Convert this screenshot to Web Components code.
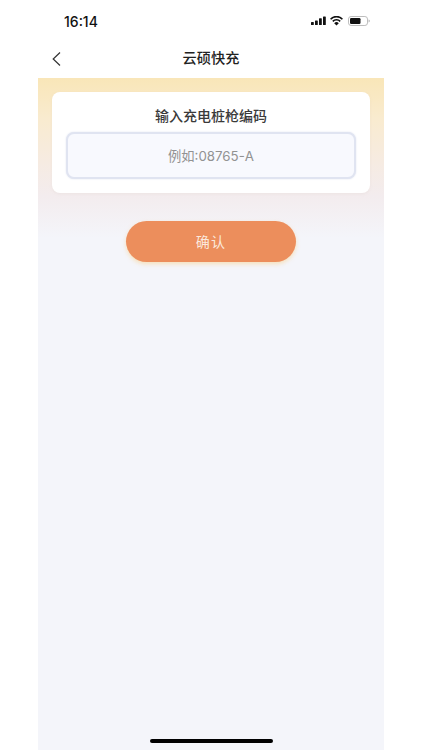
<!DOCTYPE html>
<html lang="zh">
<head>
<meta charset="utf-8">
<title>云硕快充</title>
<style>
  html, body { margin: 0; height: 100%; background: #fff; }
  body { font-family: Inter, "Noto Sans CJK SC", sans-serif; overflow: hidden; }
</style>
</head>
<body>
<charge-app>
  <status-bar time="16:14"></status-bar>
  <nav-bar>云硕快充</nav-bar>
  <code-panel heading="输入充电桩枪编码" placeholder="例如:08765-A">确认</code-panel>
</charge-app>
<script>
class ChargeApp extends HTMLElement {
  constructor() {
    super();
    this.attachShadow({ mode: "open" }).innerHTML = `
      <style>
        :host { display: flex; flex-direction: column; width: 346px; height: 750px; margin: 0 auto; position: relative; }
        .bar { position: absolute; left: 112px; bottom: 7px; width: 123px; height: 4px; border-radius: 2px; background: #000; }
      </style>
      <slot></slot>
      <div class="bar"></div>`;
  }
}

class StatusBar extends HTMLElement {
  constructor() {
    super();
    this.attachShadow({ mode: "open" }).innerHTML = `
      <style>
        :host { display: flex; justify-content: space-between; align-items: center; height: 42px; padding: 0 14px 0 26px; box-sizing: border-box; }
        .time { font: 500 14px/1 Inter, sans-serif; color: #111; padding-top: 1px; }
        svg { display: block; }
      </style>
      <span class="time">${this.getAttribute("time")}</span>
      <svg width="60" height="10" viewBox="0 0 60 10">
        <rect x="1" y="6" width="2.8" height="3" rx=".6" fill="#111"/>
        <rect x="5" y="4.4" width="2.8" height="4.6" rx=".6" fill="#111"/>
        <rect x="9" y="2.2" width="2.8" height="6.8" rx=".6" fill="#111"/>
        <rect x="13" y=".4" width="2.8" height="8.6" rx=".6" fill="#111"/>
        <path d="M20.6 3.2a8 8 0 0 1 11.8 0M22.8 5.4a5 5 0 0 1 7.4 0" fill="none" stroke="#111" stroke-width="1.6"/>
        <path d="M26.5 9.6l-2.3-2.4a3.2 3.2 0 0 1 4.6 0z" fill="#111"/>
        <rect x="38.5" y=".5" width="19" height="9" rx="2.6" fill="none" stroke="#b5b5b5" stroke-width=".9"/>
        <rect x="40" y="2" width="10.5" height="6" rx="1.2" fill="#111"/>
        <path d="M58.6 3.6c.7.2 1.1.8 1.1 1.4s-.4 1.2-1.1 1.4z" fill="#aaa"/>
      </svg>`;
  }
}

class NavBar extends HTMLElement {
  constructor() {
    super();
    this.attachShadow({ mode: "open" }).innerHTML = `
      <style>
        :host { display: flex; align-items: center; justify-content: center; height: 36px; box-sizing: border-box; padding-bottom: 5px; position: relative; font: 500 14.2px/1 "Noto Sans CJK SC", sans-serif; color: #222; }
        svg { position: absolute; left: 13px; top: 9px; }
      </style>
      <svg width="11" height="16" viewBox="0 0 11 16"><path d="M9 1.5 2.2 8 9 14.5" fill="none" stroke="#333" stroke-width="1.2"/></svg>
      <slot></slot>`;
  }
}

class CodePanel extends HTMLElement {
  constructor() {
    super();
    this.attachShadow({ mode: "open" }).innerHTML = `
      <style>
        :host { display: flex; flex: 1; flex-direction: column; align-items: center; padding: 14px 14px 0; background: linear-gradient(#f9e6b8 0, #f9ebcf 40px, #f6ebe2 85px, #f3ecee 118px, #f4f5fa 160px); }
        .card { align-self: stretch; height: 101px; box-sizing: border-box; padding: 14px 14px 0; background: #fff; border-radius: 8px; box-shadow: 0 1px 3px rgba(200,190,180,.15); }
        h2 { margin: 0 0 8px; text-align: center; font: 500 14px/18px "Noto Sans CJK SC", sans-serif; color: #3a3a3a; }
        .field { display: flex; align-items: center; justify-content: center; height: 47px; box-sizing: border-box; padding-top: 2px; background: #f8f9fe; border: 2px solid #e0e4f1; border-radius: 8px; box-shadow: 0 0 2px #dfe3f0; font: 400 13.3px/1 Inter, "Noto Sans CJK SC", sans-serif; color: #929292; }
        .confirm { display: flex; align-items: center; justify-content: center; width: 170px; height: 41px; box-sizing: border-box; padding-bottom: 2px; margin-top: 28px; border-radius: 21px; background: #ec8e5c; box-shadow: 0 2px 4px rgba(248,215,160,.7); font: 400 14px/1 "Noto Sans CJK SC", sans-serif; letter-spacing: 1.2px; color: #fbe9dc; }
      </style>
      <div class="card">
        <h2>${this.getAttribute("heading")}</h2>
        <div class="field">${this.getAttribute("placeholder")}</div>
      </div>
      <div class="confirm"><slot></slot></div>`;
  }
}

customElements.define("charge-app", ChargeApp);
customElements.define("status-bar", StatusBar);
customElements.define("nav-bar", NavBar);
customElements.define("code-panel", CodePanel);
</script>
</body>
</html>
